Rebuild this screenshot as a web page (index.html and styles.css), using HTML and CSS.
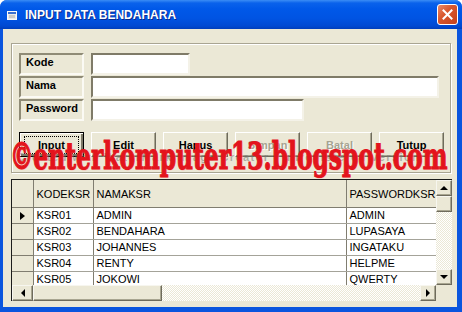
FILE: index.html
```html
<!DOCTYPE html>
<html lang="id">
<head>
    <meta charset="UTF-8">
    <meta name="viewport" content="width=device-width, initial-scale=1.0">
    <title>Input Data Bendahara</title>
    <link rel="stylesheet" href="styles.css">
</head>
<body>

<div class="window">
    <div class="titlebar">
        <svg class="app-icon" width="10" height="9" viewBox="0 0 10 9">
            <rect x="0.5" y="0.5" width="9" height="8" fill="#e8e8e8" stroke="#f8f8f8"/>
            <rect x="1" y="1" width="8" height="2" fill="#3a6fd0"/>
            <rect x="2" y="4" width="6" height="3" fill="#c8c8c8"/>
        </svg>
        <span class="title">INPUT DATA BENDAHARA</span>
        <button class="close">
            <svg width="11" height="11" viewBox="0 0 11 11">
                <path d="M1.5 1.5 L9.5 9.5 M9.5 1.5 L1.5 9.5" stroke="#fff" stroke-width="2" stroke-linecap="square"/>
            </svg>
        </button>
    </div>

    <div class="client">
        <div class="frame">
            <div class="field">
                <span class="lbl">Kode</span>
                <input type="text" class="txt txt-kode">
            </div>
            <div class="field">
                <span class="lbl">Nama</span>
                <input type="text" class="txt txt-nama">
            </div>
            <div class="field">
                <span class="lbl">Password</span>
                <input type="text" class="txt txt-pass">
            </div>

            <div class="buttons">
                <button class="btn default"><span class="focus">Input</span></button>
                <button class="btn">Edit</button>
                <button class="btn">Hapus</button>
                <button class="btn" disabled>Simpan</button>
                <button class="btn" disabled>Batal</button>
                <button class="btn"><u>T</u>utup</button>
            </div>
        </div>

        <!-- watermark over the buttons -->
        <div class="wm-gray">Created with WaterMark Image Creator - unregistered version</div>
        <div class="wm-red">©enterkomputer13.blogspot.com</div>

        <div class="datagrid">
            <div class="grid-view">
                <table>
                    <colgroup>
                        <col class="c-sel">
                        <col class="c-kode">
                        <col class="c-nama">
                        <col class="c-pass">
                    </colgroup>
                    <thead>
                        <tr>
                            <th class="sel"></th>
                            <th>KODEKSR</th>
                            <th>NAMAKSR</th>
                            <th>PASSWORDKSR</th>
                        </tr>
                    </thead>
                    <tbody>
                        <tr><td class="sel"><span class="pointer"></span></td><td>KSR01</td><td>ADMIN</td><td>ADMIN</td></tr>
                        <tr><td class="sel"></td><td>KSR02</td><td>BENDAHARA</td><td>LUPASAYA</td></tr>
                        <tr><td class="sel"></td><td>KSR03</td><td>JOHANNES</td><td>INGATAKU</td></tr>
                        <tr><td class="sel"></td><td>KSR04</td><td>RENTY</td><td>HELPME</td></tr>
                        <tr><td class="sel"></td><td>KSR05</td><td>JOKOWI</td><td>QWERTY</td></tr>
                    </tbody>
                </table>
            </div>

            <div class="vscroll">
                <div class="sb-btn"><span class="arrow up"></span></div>
                <div class="sb-btn thumb-v"></div>
                <div class="track"></div>
                <div class="sb-btn"><span class="arrow down"></span></div>
            </div>

            <div class="hscroll">
                <div class="sb-btn wide"><span class="arrow left"></span></div>
                <div class="sb-btn thumb-h"></div>
                <div class="track"></div>
                <div class="sb-btn"><span class="arrow right"></span></div>
            </div>

            <div class="corner"></div>
        </div>
    </div>
</div>

</body>
</html>
```

FILE: styles.css
```css
body {
    margin: 0;
    font-family: 'Liberation Sans', Arial, sans-serif;
    background-color: #ffffff;
}

/* Window frame */
.window {
    width: 462px;
    height: 312px;
    display: flex;
    flex-direction: column;
    background-color: #0a55de;
    border-radius: 7px 7px 0 0;
    overflow: hidden;
}

.titlebar {
    height: 29px;
    display: flex;
    align-items: center;
    padding: 0 4px 0 7px;
    box-sizing: border-box;
    background: linear-gradient(#3b8df5 0, #0a62eb 3px, #0058e8 9px, #0054e3 18px, #0049d2 26px, #003ebb 29px);
}

.app-icon {
    margin-top: 1px;
}

.title {
    flex: 1;
    margin-left: 8px;
    color: #ffffff;
    font-size: 12px;
    font-weight: bold;
    text-shadow: 1px 1px #0c2a8a;
}

.close {
    width: 21px;
    height: 21px;
    margin-right: 0;
    padding: 0;
    display: flex;
    align-items: center;
    justify-content: center;
    border: 1px solid #ffffff;
    border-radius: 3px;
    background: linear-gradient(135deg, #ea8a6a 0, #d9582f 40%, #c4401a 100%);
}

/* Client area */
.client {
    flex: 1;
    position: relative;
    margin: 0 5px 5px 3px;
    padding: 14px 0 0 8px;
    background-color: #ebe8d6;
}

/* Group frame */
.frame {
    width: 440px;
    box-sizing: border-box;
    padding: 9px 0 15px 7px;
    border: 1px solid #a9a592;
    box-shadow: inset 1px 1px #ffffff, 1px 1px #ffffff;
}

.field {
    display: flex;
    gap: 7px;
    height: 22px;
    margin-bottom: 1px;
}

.lbl {
    width: 65px;
    box-sizing: border-box;
    padding: 1px 0 0 5px;
    font-size: 11px;
    font-weight: bold;
    color: #000000;
    border: 2px solid;
    border-color: #8f8b76 #fbfaf4 #fbfaf4 #8f8b76;
}

.txt {
    height: 22px;
    box-sizing: border-box;
    margin: 0;
    padding: 0 3px;
    border: 2px solid;
    border-color: #7f7b68 #f4f2e8 #f4f2e8 #7f7b68;
    background-color: #ffffff;
    font-family: 'Liberation Sans', Arial, sans-serif;
    font-size: 11px;
}

.txt-kode { width: 99px; }
.txt-nama { width: 348px; }
.txt-pass { width: 213px; }

/* Buttons */
.buttons {
    display: flex;
    gap: 7px;
    margin-top: 11px;
}

.btn {
    width: 65px;
    height: 25px;
    padding: 0;
    font-family: 'Liberation Sans', Arial, sans-serif;
    font-size: 11px;
    font-weight: bold;
    color: #000000;
    background-color: #ebe8d6;
    border: 1px solid;
    border-color: #ffffff #6e6b5c #6e6b5c #ffffff;
    box-shadow: inset -1px -1px #a8a590;
}

.btn.default {
    border: 1px solid #000000;
    box-shadow: inset 1px 1px #ffffff, inset -2px -2px #7d7a68;
}

.btn.default .focus {
    display: inline-block;
    width: 53px;
    padding: 2px 0;
    outline: 1px dotted #000000;
}

.btn:disabled {
    color: #a6a391;
    text-shadow: 1px 1px #ffffff;
}

/* Watermark */
.wm-gray {
    position: absolute;
    left: 14px;
    top: 122px;
    width: 436px;
    font-size: 11px;
    font-weight: bold;
    letter-spacing: 1.4px;
    white-space: nowrap;
    overflow: hidden;
    color: rgba(120, 120, 120, 0.55);
}

.wm-red {
    position: absolute;
    left: 7px;
    top: 108px;
    font-family: 'DejaVu Serif', 'Liberation Serif', serif;
    font-size: 38px;
    font-weight: bold;
    line-height: 38px;
    white-space: nowrap;
    color: #e3141c;
    -webkit-text-stroke: 1.2px #e3141c;
    text-shadow: 1px 1px rgba(255, 160, 160, 0.6);
    transform: scaleX(0.615);
    transform-origin: left top;
}

/* Data grid */
.datagrid {
    width: 441px;
    height: 122px;
    margin-top: 6px;
    box-sizing: border-box;
    display: grid;
    grid-template-columns: 424px 16px;
    grid-template-rows: 105px 16px;
    border-top: 1px solid #1c1c1c;
    border-left: 1px solid #1c1c1c;
    background-color: #ebe8d6;
}

.grid-view {
    overflow: hidden;
    background-color: #ffffff;
}

table {
    width: 424px;
    table-layout: fixed;
    border-collapse: collapse;
    font-size: 11px;
}

.c-sel { width: 21px; }
.c-kode { width: 60px; }
.c-nama { width: 253px; }
.c-pass { width: 90px; }

th {
    height: 27px;
    padding: 0 0 0 3px;
    text-align: left;
    font-weight: normal;
    background-color: #ebe8d6;
    border-right: 1px solid #807d70;
    border-bottom: 1px solid #807d70;
    white-space: nowrap;
    overflow: hidden;
}

td {
    height: 15px;
    padding: 0 0 0 3px;
    line-height: 15px;
    background-color: #ffffff;
    border-right: 1px solid #807d70;
    border-bottom: 1px solid #a4a399;
    white-space: nowrap;
    overflow: hidden;
}

td.sel, th.sel {
    padding: 0;
    background-color: #ebe8d6;
    border-bottom-color: #807d70;
}

.pointer {
    display: block;
    width: 0;
    height: 0;
    margin-left: 8px;
    border-top: 4px solid transparent;
    border-bottom: 4px solid transparent;
    border-left: 5px solid #000000;
}

/* Scrollbars */
.vscroll {
    display: flex;
    flex-direction: column;
}

.hscroll {
    display: flex;
}

.track {
    flex: 1;
    background-image: repeating-conic-gradient(#ffffff 0% 25%, #ebe8d6 0% 50%);
    background-size: 2px 2px;
}

.sb-btn {
    width: 16px;
    height: 16px;
    box-sizing: border-box;
    display: flex;
    align-items: center;
    justify-content: center;
    background-color: #ebe8d6;
    border: 1px solid;
    border-color: #f7f6ef #6e6b5c #6e6b5c #f7f6ef;
    box-shadow: inset -1px -1px #a8a590;
}

.sb-btn.wide {
    width: 21px;
}

.thumb-h {
    width: 129px;
}

.arrow {
    width: 0;
    height: 0;
}

.arrow.up {
    border-left: 4px solid transparent;
    border-right: 4px solid transparent;
    border-bottom: 4px solid #000000;
}

.arrow.down {
    border-left: 4px solid transparent;
    border-right: 4px solid transparent;
    border-top: 4px solid #000000;
}

.arrow.left {
    border-top: 4px solid transparent;
    border-bottom: 4px solid transparent;
    border-right: 4px solid #000000;
}

.arrow.right {
    border-top: 4px solid transparent;
    border-bottom: 4px solid transparent;
    border-left: 4px solid #000000;
}

.corner {
    background-color: #ebe8d6;
}
```
